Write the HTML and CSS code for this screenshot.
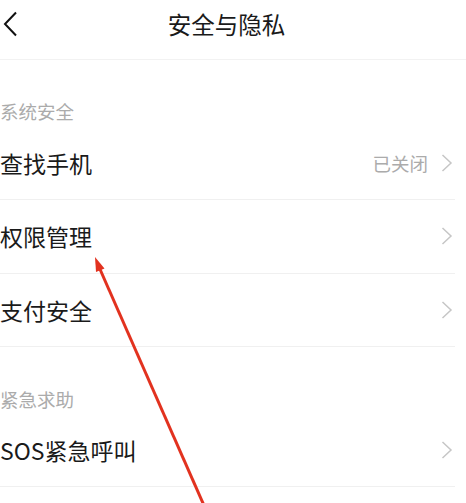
FILE: index.html
```html
<!DOCTYPE html>
<html lang="zh">
<head>
<meta charset="utf-8">
<link rel="stylesheet" href="styles.css">
</head>
<body>
<div class="page">
  <header class="header">
    <svg class="back" width="16" height="26" viewBox="0 0 16 26"><path d="M14 1.5 L3 13 L14 24.5" fill="none" stroke="#111" stroke-width="2"/></svg>
    <div class="title">安全与隐私</div>
  </header>
  <div class="section first">系统安全</div>
  <div class="row"><span class="label">查找手机</span><span class="right"><span class="value">已关闭</span><svg class="chev" width="12" height="18" viewBox="0 0 12 18"><path d="M1.5 1 L10 9 L1.5 17" fill="none" stroke="#c6c6c6" stroke-width="1.5"/></svg></span></div>
  <div class="row"><span class="label">权限管理</span><span class="right"><svg class="chev" width="12" height="18" viewBox="0 0 12 18"><path d="M1.5 1 L10 9 L1.5 17" fill="none" stroke="#c6c6c6" stroke-width="1.5"/></svg></span></div>
  <div class="row"><span class="label">支付安全</span><span class="right"><svg class="chev" width="12" height="18" viewBox="0 0 12 18"><path d="M1.5 1 L10 9 L1.5 17" fill="none" stroke="#c6c6c6" stroke-width="1.5"/></svg></span></div>
  <div class="section">紧急求助</div>
  <div class="row"><span class="label">SOS紧急呼叫</span><span class="right"><svg class="chev" width="12" height="18" viewBox="0 0 12 18"><path d="M1.5 1 L10 9 L1.5 17" fill="none" stroke="#c6c6c6" stroke-width="1.5"/></svg></span></div>
  <svg class="arrow" width="466" height="503" viewBox="0 0 466 503">
    <line x1="99" y1="267" x2="206" y2="510" stroke="#e2321f" stroke-width="3"/>
    <polygon points="95,257 104.5,268.5 96,272" fill="#e2321f"/>
  </svg>
</div>
</body>
</html>
```
FILE: styles.css
```css
html, body {
  margin: 0;
  padding: 0;
  background: #fff;
}
.page {
  position: relative;
  width: 466px;
  height: 503px;
  overflow: hidden;
  font-family: "Noto Sans CJK SC", "Noto Sans", sans-serif;
  color: #1a1a1a;
}
.header {
  display: flex;
  align-items: center;
  justify-content: center;
  position: relative;
  height: 48px;
  padding: 0 13px 11px 0;
  border-bottom: 1px solid #f2f2f2;
}
.back {
  position: absolute;
  left: 2px;
  top: 11px;
}
.title {
  font-size: 23.5px;
  line-height: 28px;
  letter-spacing: 0;
}
.section {
  font-size: 18.5px;
  line-height: 24px;
  color: #ababab;
  padding: 39px 0 4px 0;
}
.section + .row {
  height: 73px;
}
.section:not(.first) {
  padding-top: 40px;
  padding-bottom: 3px;
}
.row {
  display: flex;
  align-items: center;
  justify-content: space-between;
  height: 73px;
  margin-right: 11px;
  border-bottom: 1px solid #f0f0f0;
  box-sizing: border-box;
}
.row + .row {
  height: 73.5px;
}
.label {
  font-size: 23px;
  line-height: 28px;
}
.right {
  display: flex;
  align-items: center;
  gap: 13px;
  padding-right: 2px;
}
.value {
  font-size: 18.5px;
  line-height: 24px;
  color: #ababab;
}
.chev {
  display: block;
}
.arrow {
  position: absolute;
  left: 0;
  top: 0;
  pointer-events: none;
}
```
